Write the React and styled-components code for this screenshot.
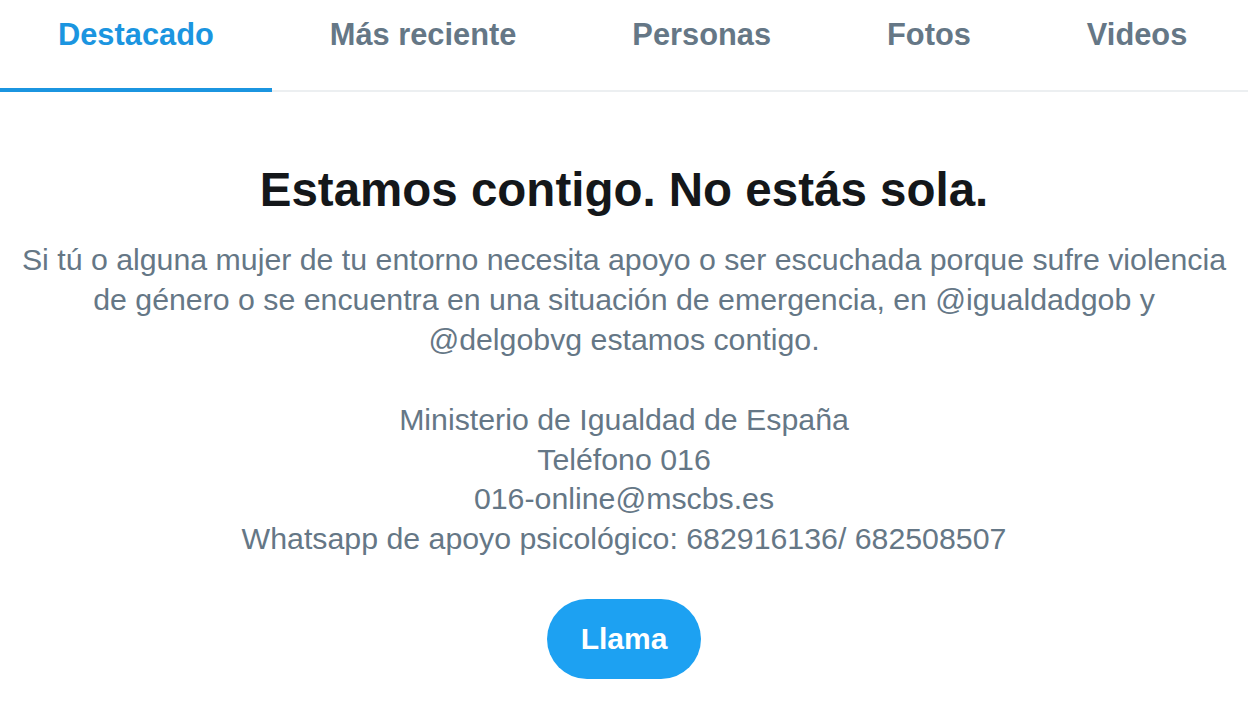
import React from 'react';
import styled, { createGlobalStyle } from 'styled-components';

const GlobalStyle = createGlobalStyle`
  body {
    margin: 0;
    background: #ffffff;
    font-family: "Liberation Sans", Arial, sans-serif;
  }
`;

const Page = styled.div`
  width: 1248px;
  height: 702px;
  overflow: hidden;
  background: #ffffff;
  display: flex;
  flex-direction: column;
`;

const TabBar = styled.nav`
  display: flex;
  height: 92px;
  border-bottom: 2px solid #eceff1;
  box-sizing: border-box;
`;

const Tab = styled.div`
  position: relative;
  flex-shrink: 0;
  white-space: nowrap;
  padding: 17px 58px 0;
  font-size: 30.8px;
  font-weight: 700;
  color: ${(p) => (p.$active ? '#1b95e0' : '#657786')};

  &::after {
    content: '';
    display: ${(p) => (p.$active ? 'block' : 'none')};
    position: absolute;
    left: 0;
    right: 0;
    bottom: -2px;
    height: 4px;
    background: #1b95e0;
  }
`;

const Content = styled.main`
  display: flex;
  flex-direction: column;
  align-items: center;
  text-align: center;
  padding-top: 72px;
`;

const Title = styled.h1`
  margin: 0;
  font-size: 47.5px;
  line-height: 52px;
  font-weight: 700;
  color: #14171a;
`;

const Lead = styled.p`
  margin: 24px 0 0;
  font-size: 30.3px;
  line-height: 40px;
  color: #657786;
`;

const Contact = styled.div`
  margin-top: 40px;
  font-size: 30.3px;
  line-height: 39.5px;
  color: #657786;
`;

const CallButton = styled.button`
  margin-top: 41px;
  width: 154px;
  height: 80px;
  border: none;
  border-radius: 40px;
  background: #1da1f2;
  color: #ffffff;
  font-family: inherit;
  font-size: 30px;
  font-weight: 700;
  cursor: pointer;
`;

const tabs = ['Destacado', 'Más reciente', 'Personas', 'Fotos', 'Videos'];

const leadLines = [
  'Si tú o alguna mujer de tu entorno necesita apoyo o ser escuchada porque sufre violencia',
  'de género o se encuentra en una situación de emergencia, en @igualdadgob y',
  '@delgobvg estamos contigo.',
];

const contactLines = [
  'Ministerio de Igualdad de España',
  'Teléfono 016',
  '016-online@mscbs.es',
  'Whatsapp de apoyo psicológico: 682916136/ 682508507',
];

export default function App() {
  return (
    <Page>
      <GlobalStyle />
      <TabBar>
        {tabs.map((t, i) => (
          <Tab key={t} $active={i === 0}>{t}</Tab>
        ))}
      </TabBar>
      <Content>
        <Title>Estamos contigo. No estás sola.</Title>
        <Lead>
          {leadLines.map((l, i) => (
            <React.Fragment key={i}>
              {l}
              {i < leadLines.length - 1 && <br />}
            </React.Fragment>
          ))}
        </Lead>
        <Contact>
          {contactLines.map((l) => (
            <div key={l}>{l}</div>
          ))}
        </Contact>
        <CallButton>Llama</CallButton>
      </Content>
    </Page>
  );
}
